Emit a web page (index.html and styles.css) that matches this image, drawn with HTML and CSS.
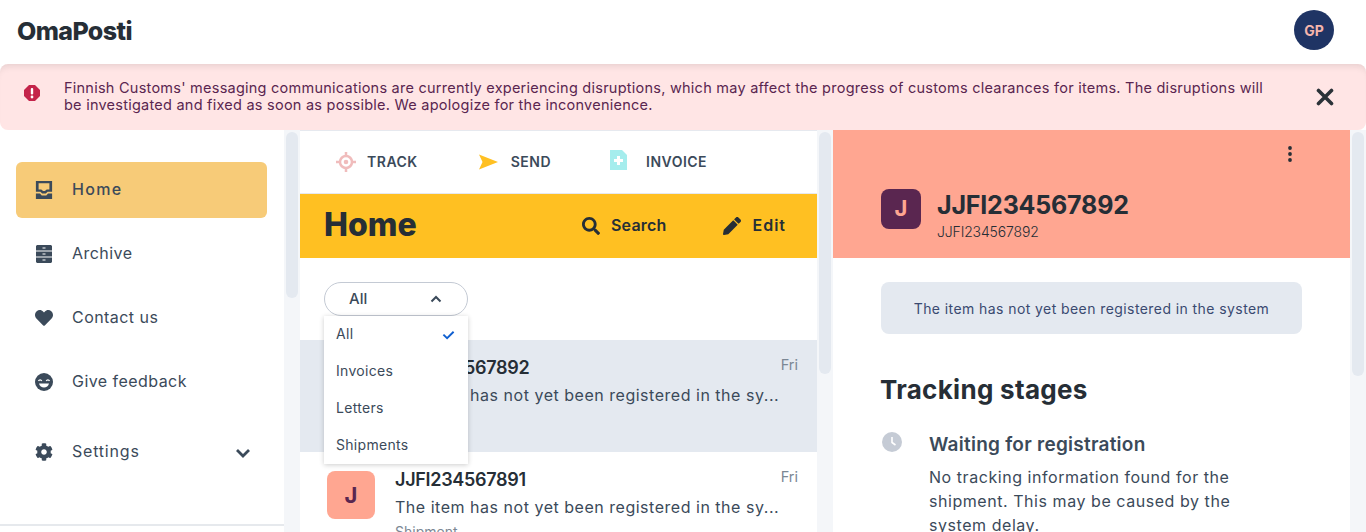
FILE: index.html
```html
<!DOCTYPE html>
<html lang="en">
<head>
<title>OmaPosti</title>
<meta charset="UTF-8">
<link rel="stylesheet" href="styles.css">
</head>
<body>
  <header class="top">
    <div class="logo">OmaPosti</div>
    <div class="user">GP</div>
  </header>

  <div class="alert">
    <svg class="alert-icon" viewBox="0 0 16 16"><polygon fill="#c4244a" points="5,0 11,0 16,5 16,11 11,16 5,16 0,11 0,5"/><rect fill="#fff" x="6.8" y="3" width="2.4" height="6.5" rx="1"/><circle fill="#fff" cx="8" cy="12" r="1.4"/></svg>
    <p class="alert-text">Finnish Customs' messaging communications are currently experiencing disruptions, which may affect the progress of customs clearances for items. The disruptions will be investigated and fixed as soon as possible. We apologize for the inconvenience.</p>
    <svg class="alert-close" viewBox="0 0 18 18"><path d="M2.5 2.5L15.5 15.5M15.5 2.5L2.5 15.5" stroke="#2b3238" stroke-width="3.6" stroke-linecap="round"/></svg>
  </div>

  <main class="columns">
    <nav class="side">
      <a class="nav-item active">
        <svg class="nav-icon" viewBox="0 0 18 20"><path d="M0 0h18v12h-5l-2 2H7l-2-2H0zM3 2.500v7h3l2 1.500h2l2-1.500h3v-7z"/><path d="M0 14h4.500l2 2h5l2-2H18v6H0z"/></svg>
        <span>Home</span>
      </a>
      <a class="nav-item">
        <svg class="nav-icon nav-icon-narrow" viewBox="0 0 16 18"><path d="M1 0h14l1 1v4.500H0V1zM0 6.500h16v5H0zM0 12.500h16V17l-1 1H1l-1-1z"/><path d="M6.500 2.500h3v1h-3zM6.500 8.500h3v1h-3zM6.500 14.500h3v1h-3z" fill="#fff"/></svg>
        <span>Archive</span>
      </a>
      <a class="nav-item">
        <svg class="nav-icon" viewBox="0 0 512 512"><path d="M462.300 62.600C407.500 15.900 326 24.300 275.700 76.200L256 96.500l-19.700-20.300C186.100 24.300 104.500 15.900 49.700 62.600c-62.800 53.600-66.100 149.800-9.900 207.900l193.500 199.800c12.500 12.900 32.800 12.900 45.300 0l193.500-199.800c56.300-58.100 53-154.300-9.800-207.900z"/></svg>
        <span>Contact us</span>
      </a>
      <a class="nav-item">
        <svg class="nav-icon" viewBox="0 0 18 18"><circle cx="9" cy="9" r="9"/><path d="M3.500 8c.6-1.600 2.600-1.600 3.200 0M11.300 8c.6-1.600 2.600-1.600 3.200 0" fill="none" stroke="#fff" stroke-width="1.300"/><path d="M4 10.500h10c-.6 2.600-2.600 4-5 4s-4.400-1.400-5-4z" fill="#fff"/></svg>
        <span>Give feedback</span>
      </a>
      <a class="nav-item settings">
        <svg class="nav-icon" viewBox="0 0 512 512"><path d="M487.400 315.700l-42.600-24.600c4.300-23.200 4.300-47 0-70.200l42.600-24.600c4.900-2.800 7.100-8.600 5.500-14-11.100-35.600-30-67.800-54.700-94.600-3.800-4.100-10-5.100-14.800-2.300L380.800 110c-17.900-15.400-38.500-27.300-60.800-35.100V25.800c0-5.600-3.900-10.500-9.400-11.700-36.700-8.200-74.300-7.800-109.200 0-5.500 1.200-9.400 6.100-9.400 11.700V75c-22.200 7.900-42.800 19.800-60.800 35.100L88.700 85.500c-4.900-2.800-11-1.900-14.800 2.300-24.700 26.700-43.600 58.900-54.700 94.600-1.700 5.400.6 11.200 5.500 14L67.300 221c-4.300 23.200-4.300 47 0 70.200l-42.600 24.600c-4.900 2.800-7.100 8.600-5.500 14 11.100 35.600 30 67.800 54.700 94.600 3.800 4.100 10 5.100 14.800 2.300l42.600-24.600c17.900 15.400 38.500 27.300 60.800 35.100v49.200c0 5.600 3.900 10.500 9.400 11.700 36.700 8.200 74.300 7.800 109.200 0 5.500-1.200 9.400-6.100 9.400-11.700v-49.200c22.200-7.900 42.800-19.800 60.800-35.100l42.600 24.600c4.900 2.800 11 1.900 14.800-2.300 24.700-26.700 43.600-58.900 54.700-94.600 1.500-5.500-.7-11.300-5.600-14.100zM256 336c-44.100 0-80-35.900-80-80s35.900-80 80-80 80 35.900 80 80-35.900 80-80 80z"/></svg>
        <span>Settings</span>
        <svg class="nav-chevron" viewBox="0 0 16 10"><path d="M2 2l6 6 6-6" fill="none" stroke="#3b4a5a" stroke-width="2.800"/></svg>
      </a>
      <div class="side-rule"></div>
    </nav>
    <div class="track"><div class="thumb thumb-side"></div></div>

    <section class="list">
      <div class="tabs">
        <a class="tab tab-track">
          <svg class="tab-icon" viewBox="0 0 20 20"><circle cx="10" cy="10" r="6" fill="none" stroke="#f0bcbc" stroke-width="2.500"/><circle cx="10" cy="10" r="2.300" fill="#f0bcbc"/><path d="M10 0v4M10 16v4M0 10h4M16 10h4" stroke="#f0bcbc" stroke-width="2.500"/></svg>
          <span>TRACK</span>
        </a>
        <a class="tab tab-send">
          <svg class="tab-icon" viewBox="0 0 20 16"><path d="M0 .500L19 8 0 15.500 3.500 8z" fill="#ffc022"/></svg>
          <span>SEND</span>
        </a>
        <a class="tab tab-invoice">
          <svg class="tab-icon" viewBox="0 0 17 20"><path d="M0 0h12l5 5v15H0z" fill="#a5eded"/><path d="M7 6h3v3h3v3h-3v3H7v-3H4V9h3z" fill="#fff"/></svg>
          <span>INVOICE</span>
        </a>
      </div>

      <div class="list-bar">
        <h1 class="list-title">Home</h1>
        <a class="bar-action action-search">
          <svg viewBox="0 0 512 512"><path d="M505 442.700L405.300 343c-4.500-4.500-10.600-7-17-7H372c27.600-35.300 44-79.700 44-128C416 93.100 322.900 0 208 0S0 93.100 0 208s93.100 208 208 208c48.300 0 92.700-16.400 128-44v16.300c0 6.400 2.500 12.500 7 17l99.700 99.700c9.400 9.400 24.600 9.400 33.900 0l28.300-28.300c9.400-9.400 9.400-24.600.1-34zM208 336c-70.700 0-128-57.200-128-128 0-70.700 57.200-128 128-128 70.700 0 128 57.200 128 128 0 70.700-57.200 128-128 128z"/></svg>
          <span>Search</span>
        </a>
        <a class="bar-action action-edit">
          <svg viewBox="0 0 512 512"><path d="M497.900 142.100l-46.100 46.100c-4.700 4.700-12.300 4.700-17 0l-111-111c-4.700-4.700-4.700-12.300 0-17l46.100-46.100c18.700-18.700 49.100-18.700 67.900 0l60.100 60.100c18.800 18.700 18.800 49.100 0 67.900zM284.200 99.800L21.600 362.400.4 483.900c-2.900 16.400 11.400 30.600 27.800 27.800l121.500-21.300 262.600-262.600c4.700-4.700 4.700-12.300 0-17l-111-111c-4.800-4.700-12.400-4.700-17.100 0z"/></svg>
          <span>Edit</span>
        </a>
      </div>

      <div class="filter">
        <div class="filter-btn">
          <span>All</span>
          <svg viewBox="0 0 12 8"><path d="M1.500 6.500L6 2l4.500 4.500" fill="none" stroke="#3b4a5a" stroke-width="2"/></svg>
        </div>
        <ul class="filter-menu">
          <li><span>All</span> <svg viewBox="0 0 14 10"><path d="M1.500 4.500L5.500 8.500 12.500 1.500" fill="none" stroke="#0f5fd0" stroke-width="2"/></svg></li>
          <li><span>Invoices</span></li>
          <li><span>Letters</span></li>
          <li><span>Shipments</span></li>
        </ul>
      </div>

      <article class="item selected">
        <div class="avatar">J</div>
        <div class="item-body">
          <div class="item-head"><span class="item-id">JJFI234567892</span><span class="item-day">Fri</span></div>
          <div class="item-text">The item has not yet been registered in the sy...</div>
          <div class="item-kind">Shipment</div>
        </div>
      </article>
      <article class="item">
        <div class="avatar">J</div>
        <div class="item-body">
          <div class="item-head"><span class="item-id">JJFI234567891</span><span class="item-day">Fri</span></div>
          <div class="item-text">The item has not yet been registered in the sy...</div>
          <div class="item-kind">Shipment</div>
        </div>
      </article>
    </section>
    <div class="track"><div class="thumb thumb-list"></div></div>

    <section class="detail">
      <div class="detail-head">
        <svg class="kebab" viewBox="0 0 4 16"><circle cx="2" cy="2" r="1.900"/><circle cx="2" cy="8" r="1.900"/><circle cx="2" cy="14" r="1.900"/></svg>
        <div class="detail-row">
          <div class="detail-avatar">J</div>
          <div>
            <div class="detail-id">JJFI234567892</div>
            <div class="detail-sub">JJFI234567892</div>
          </div>
        </div>
      </div>
      <div class="detail-body">
        <div class="notice">The item has not yet been registered in the system</div>
        <h2 class="stages-title">Tracking stages</h2>
        <div class="stage">
          <svg class="stage-icon" viewBox="0 0 20 20"><circle cx="10" cy="10" r="10" fill="#c5cbd5"/><path d="M10 5v5.500l3.500 2.500" fill="none" stroke="#fff" stroke-width="1.600"/></svg>
          <div>
            <h3 class="stage-title">Waiting for registration</h3>
            <p class="stage-text">No tracking information found for the shipment. This may be caused by the system delay.</p>
          </div>
        </div>
      </div>
    </section>
    <div class="track"><div class="thumb thumb-detail"></div></div>
  </main>
</body>
</html>
```

FILE: styles.css
```css
html, body {
    margin: 0;
    height: 532px;
    overflow: hidden;
}
body {
    font-family: Inter, "Liberation Sans", sans-serif;
    color: #3b4a5a;
    background-color: #ffffff;
}
h1, h2, h3, p, ul {
    margin: 0;
    padding: 0;
}

/* top bar */
.top {
    height: 64px;
    display: flex;
    align-items: center;
    justify-content: space-between;
    padding: 0 32px 4px 17px;
    box-sizing: border-box;
}
.logo {
    font-size: 25px;
    font-weight: 800;
    letter-spacing: -0.6px;
    color: #262e36;
    margin-top: 2px;
}
.user {
    width: 40px;
    height: 40px;
    border-radius: 50%;
    background-color: #1f3464;
    color: #f5b5ac;
    font-size: 14px;
    font-weight: 700;
    display: flex;
    align-items: center;
    justify-content: center;
}

/* alert */
.alert {
    height: 66px;
    display: flex;
    align-items: center;
    padding: 0 32px 0 24px;
    border-radius: 8px;
    background-color: #ffe5e5;
    box-shadow: inset 0 7px 7px -5px rgba(0, 0, 0, 0.1);
    box-sizing: border-box;
}
.alert-icon {
    width: 16px;
    height: 16px;
    flex: none;
    margin-right: 24px;
    margin-top: -8px;
}
.alert-text {
    width: 1216px;
    font-size: 14.5px;
    line-height: 17px;
    letter-spacing: 0.245px;
    color: #5a2650;
    margin-top: -3px;
}
.alert-close {
    width: 18px;
    height: 18px;
    margin-left: 36px;
    flex: none;
}

/* columns */
.columns {
    height: 402px;
    display: flex;
}
.track {
    width: 16px;
    flex: none;
    background-color: #f4f6f9;
    padding: 2px 2px 0;
    box-sizing: border-box;
}
.thumb {
    background-color: #e4e9f0;
    border-radius: 6px;
}
.thumb-side { height: 166px; }
.thumb-list { height: 242px; }
.thumb-detail { height: 244px; }

/* side nav */
.side {
    width: 284px;
    flex: none;
    padding: 32px 17px 0 16px;
    box-sizing: border-box;
    position: relative;
}
.nav-item {
    height: 56px;
    margin-bottom: 8px;
    display: flex;
    align-items: center;
    padding: 0 16px 0 19px;
    border-radius: 6px;
    font-size: 16px;
    letter-spacing: 0.45px;
    color: #3b4a5a;
}
.nav-item span {
    margin-top: -2px;
}
.nav-item.active {
    background-color: #f7cb78;
    font-weight: 500;
    letter-spacing: 1.3px;
}
.nav-icon {
    width: 18px;
    height: 18px;
    flex: none;
    margin-right: 19px;
    fill: #3b4a5a;
}
.nav-icon-narrow {
    width: 16px;
    margin: 0 20px 0 1px;
}
.settings {
    margin-top: 19px;
    height: 46px;
    letter-spacing: 0.8px;
}
.nav-chevron {
    width: 16px;
    height: 10px;
    margin-left: auto;
    margin-top: 2px;
}
.side-rule {
    position: absolute;
    left: 0;
    right: 0;
    top: 394px;
    height: 2px;
    background-color: #e6e9ed;
}

/* list column */
.list {
    width: 517px;
    flex: none;
    overflow: hidden;
}
.tabs {
    height: 64px;
    display: flex;
    align-items: center;
    border-top: 1px solid #e6e9ef;
    border-bottom: 1px solid #e6e9ef;
    box-sizing: border-box;
    font-size: 14px;
    font-weight: 600;
    letter-spacing: 0.5px;
}
.tab {
    display: flex;
    align-items: center;
}
.tab span {
    margin-top: -2px;
}
.tab-icon { flex: none; }
.tab-track { margin-left: 36px; }
.tab-track .tab-icon { width: 20px; height: 20px; margin-right: 11px; }
.tab-send { margin-left: 61px; }
.tab-send .tab-icon { width: 20px; height: 16px; margin-right: 12px; }
.tab-invoice { margin-left: 59px; }
.tab-invoice .tab-icon { width: 17px; height: 20px; margin-right: 19px; margin-top: -4px; }

.list-bar {
    height: 64px;
    background-color: #ffc022;
    display: flex;
    align-items: center;
    padding: 0 31px 0 24px;
    color: #262e36;
}
.list-title {
    font-size: 32px;
    font-weight: 800;
    margin: -3px auto 0 0;
}
.bar-action {
    display: flex;
    align-items: center;
    font-size: 16px;
    font-weight: 600;
    letter-spacing: 0.2px;
}
.bar-action span {
    margin-top: -2px;
}
.action-edit {
    letter-spacing: 1px;
}
.bar-action svg {
    width: 18px;
    height: 18px;
    margin-right: 11px;
    fill: #262e36;
}
.action-search { margin-right: 57px; }

.filter {
    height: 82px;
    position: relative;
    padding: 24px 0 0 24px;
    box-sizing: border-box;
}
.filter-btn {
    width: 144px;
    height: 34px;
    border: 1px solid #c4cad4;
    border-radius: 17px;
    box-sizing: border-box;
    display: flex;
    align-items: center;
    justify-content: space-between;
    padding: 0 25px 0 24px;
    font-size: 15px;
    font-weight: 500;
}
.filter-btn span {
    margin-top: -2px;
}
.filter-btn svg {
    width: 12px;
    height: 8px;
}
.filter-menu {
    position: absolute;
    z-index: 5;
    left: 24px;
    top: 58px;
    width: 144px;
    height: 148px;
    list-style: none;
    background-color: #ffffff;
    box-shadow: 0 1px 5px rgba(0, 0, 0, 0.2);
    font-size: 14px;
    letter-spacing: 0.3px;
}
.filter-menu li {
    height: 37px;
    display: flex;
    align-items: center;
    justify-content: space-between;
    padding: 0 13px 0 12px;
}
.filter-menu span {
    margin-top: -2px;
}
.filter-menu svg {
    width: 13px;
    height: 10px;
}

.item {
    height: 112px;
    display: flex;
    padding: 19px 19px 0 27px;
    box-sizing: border-box;
}
.item.selected { background-color: #e4e9f0; }
.avatar {
    width: 48px;
    height: 48px;
    flex: none;
    margin-right: 20px;
    border-radius: 8px;
    background-color: #ffa691;
    color: #5a2650;
    font-size: 22px;
    font-weight: 700;
    display: flex;
    align-items: center;
    justify-content: center;
}
.item-body {
    flex: 1;
    min-width: 0;
}
.item-head {
    display: flex;
    justify-content: space-between;
    align-items: center;
    height: 18px;
    margin-top: -1px;
}
.item-id {
    font-size: 18px;
    font-weight: 600;
    letter-spacing: -0.3px;
    color: #262e36;
}
.item-day {
    font-size: 14.5px;
    color: #7b8794;
    margin-top: -6px;
}
.item-text {
    margin-top: 9px;
    font-size: 16px;
    line-height: 20px;
    letter-spacing: 0.52px;
    white-space: nowrap;
}
.item-kind {
    margin-top: 6px;
    font-size: 14px;
    color: #7b8794;
}

/* detail column */
.detail {
    width: 517px;
    flex: none;
    overflow: hidden;
}
.detail-head {
    height: 128px;
    background-color: #ffa691;
    position: relative;
    padding: 59px 48px 0;
    box-sizing: border-box;
}
.kebab {
    position: absolute;
    right: 58px;
    top: 16px;
    width: 4px;
    height: 16px;
    fill: #262e36;
}
.detail-row {
    display: flex;
}
.detail-avatar {
    width: 40px;
    height: 40px;
    flex: none;
    margin-right: 16px;
    border-radius: 8px;
    background-color: #5a2650;
    color: #ffa691;
    font-size: 22px;
    font-weight: 700;
    padding-bottom: 3px;
    box-sizing: border-box;
    display: flex;
    align-items: center;
    justify-content: center;
}
.detail-id {
    font-size: 25px;
    font-weight: 700;
    line-height: 32px;
    letter-spacing: -0.2px;
    color: #262e36;
}
.detail-sub {
    font-size: 14px;
    font-weight: 300;
    line-height: 18px;
    letter-spacing: -0.15px;
    color: #262e36;
    margin-top: 2px;
}
.detail-body {
    padding: 24px 48px 0;
}
.notice {
    height: 52px;
    width: 421px;
    border-radius: 8px;
    background-color: #e4e9f0;
    display: flex;
    align-items: center;
    justify-content: center;
    font-size: 14px;
    letter-spacing: 0.42px;
    color: #3a4a70;
}
.stages-title {
    margin-top: 41px;
    margin-left: -1px;
    font-size: 26px;
    line-height: 30px;
    font-weight: 700;
    letter-spacing: 0.3px;
    color: #262e36;
}
.stage {
    display: flex;
    margin-top: 27px;
}
.stage-icon {
    width: 20px;
    height: 20px;
    flex: none;
    margin: 0 27px 0 1px;
}
.stage-title {
    font-size: 19px;
    line-height: 24px;
    font-weight: 600;
    letter-spacing: 0.25px;
    padding-top: 1px;
}
.stage-text {
    width: 320px;
    margin-top: 8px;
    font-size: 16px;
    line-height: 24px;
    letter-spacing: 0.55px;
}
```
